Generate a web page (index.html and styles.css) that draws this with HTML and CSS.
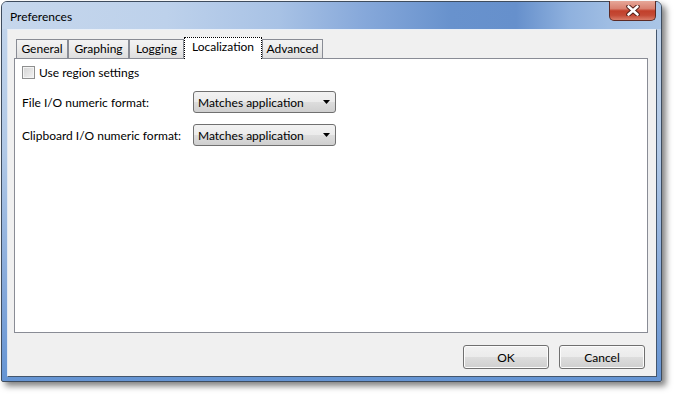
FILE: index.html
```html
<html>
	<head>
		<meta charset="utf-8">
		<link rel="stylesheet" href="styles.css">
	</head>
	<body>
		<div class="window">
			<div class="titlebar">
				<span class="title">Preferences</span>
				<div class="close">
					<svg width="14" height="11" viewBox="0 0 14 11">
						<path d="M2.5 1.5 L11.5 9.5 M11.5 1.5 L2.5 9.5" stroke="#4a1a14" stroke-width="4.4" stroke-linecap="round"/>
						<path d="M2.5 1.5 L11.5 9.5 M11.5 1.5 L2.5 9.5" stroke="#ffffff" stroke-width="2.6" stroke-linecap="round"/>
					</svg>
				</div>
			</div>

			<div class="client">
				<div class="tabs">
					<div class="tab general">General</div>
					<div class="tab graphing">Graphing</div>
					<div class="tab logging">Logging</div>
					<div class="tab localization active">Localization</div>
					<div class="tab advanced">Advanced</div>
				</div>

				<div class="panel">
					<label class="check"><span class="box"></span>Use region settings</label>

					<div class="form">
						<span class="label">File I/O numeric format:</span>
						<div class="combo">
							<span>Matches application</span>
							<svg class="arrow" width="7" height="4" viewBox="0 0 7 4"><path d="M0 0 H7 L3.5 4 Z" fill="#000"/></svg>
						</div>

						<span class="label">Clipboard I/O numeric format:</span>
						<div class="combo">
							<span>Matches application</span>
							<svg class="arrow" width="7" height="4" viewBox="0 0 7 4"><path d="M0 0 H7 L3.5 4 Z" fill="#000"/></svg>
						</div>
					</div>
				</div>

				<div class="footer">
					<button class="btn">OK</button>
					<button class="btn">Cancel</button>
				</div>
			</div>
		</div>
	</body>
</html>
```

FILE: styles.css
```css
body {
	margin: 0;
	padding: 0;
	background: #ffffff;
	font-family: "Lato", "Liberation Sans", sans-serif;
	font-size: 12px;
	color: #000;
}

.window {
	box-sizing: border-box;
	width: 661px;
	height: 381px;
	margin: 1px 0 0 1px;
	border: 1px solid #3e4c5e;
	border-radius: 6px 6px 2px 2px;
	background: linear-gradient(to bottom, #c4d6ec 0%, #b0c8e6 40%, #86a9da 75%, #6594d3 100%);
	box-shadow: 4px 4px 6px rgba(0, 0, 0, 0.5);
	display: flex;
	flex-direction: column;
}

.titlebar {
	height: 27px;
	display: flex;
	align-items: center;
	justify-content: space-between;
	padding-left: 8px;
	border-radius: 5px 5px 0 0;
	background: linear-gradient(to right, #c6d7ec 0%, #bdd1eb 25%, #a8c2e5 42%, #86a8da 55%, #6892cd 68%, #6690cc 78%, #8fb1de 86%, #9fbde3 92%, #aac5e6 100%);
}

.title {
	color: #000;
	padding-top: 1px;
}

.close {
	align-self: flex-start;
	box-sizing: border-box;
	width: 47px;
	height: 20px;
	margin-top: -1px;
	margin-right: 5px;
	border: 1px solid #5c2a24;
	border-top: none;
	border-radius: 0 0 5px 5px;
	background: linear-gradient(to bottom, #e6a798 0%, #d98170 40%, #c2402b 52%, #c44a36 75%, #d97c68 100%);
	display: flex;
	align-items: center;
	justify-content: center;
}

.client {
	flex: 1;
	display: flex;
	flex-direction: column;
	margin: 0 4px 4px 5px;
	padding: 7px 8px 7px 6px;
	background: #f0f0f0;
	border: 1px solid #44566d;
	border-top-color: #e9eff7;
	border-left-color: #dfe7f2;
}

.tabs {
	display: flex;
	align-items: flex-end;
	height: 21px;
	padding-left: 2px;
	position: relative;
	z-index: 1;
}

.tab {
	box-sizing: border-box;
	height: 19px;
	text-align: center;
	line-height: 18px;
	border: 1px solid #898c95;
	border-bottom: none;
	background: linear-gradient(to bottom, #f3f3f3 0%, #ebebeb 50%, #dedede 100%);
}

.tab.general { width: 52px; }
.tab.graphing { width: 61px; }
.tab.logging { width: 55px; }
.tab.localization { width: 78px; }
.tab.advanced { width: 61px; }

.tab.active {
	height: 22px;
	margin-bottom: -1px;
	line-height: 17px;
	background: #ffffff;
	border: 1px dotted #000;
	border-bottom: none;
}

.panel {
	flex: 1;
	background: #ffffff;
	border: 1px solid #898c95;
	padding: 6px 8px 0 7px;
}

.check {
	display: flex;
	align-items: center;
	height: 15px;
	gap: 4px;
}

.box {
	box-sizing: border-box;
	width: 13px;
	height: 13px;
	border: 1px solid #8e8f8f;
	background: linear-gradient(135deg, #d4d4d4 0%, #e6e6e6 60%, #f4f4f4 100%);
	box-shadow: inset 0 0 0 1px #f4f4f4;
}

.form {
	display: grid;
	grid-template-columns: 171px 143px;
	grid-auto-rows: 22px;
	row-gap: 11px;
	margin-top: 11px;
	align-items: center;
}

.combo {
	box-sizing: border-box;
	height: 22px;
	display: flex;
	align-items: center;
	justify-content: space-between;
	padding: 0 5px 0 4px;
	border: 1px solid #707070;
	border-radius: 3px;
	background: linear-gradient(to bottom, #f2f2f2 0%, #ebebeb 49%, #dddddd 51%, #cfcfcf 100%);
}

.footer {
	display: flex;
	justify-content: flex-end;
	gap: 10px;
	margin-top: 12px;
	padding-right: 3px;
}

.btn {
	box-sizing: border-box;
	width: 86px;
	height: 24px;
	font-family: inherit;
	font-size: 12px;
	color: #000;
	border: 1px solid #707070;
	border-radius: 3px;
	background: linear-gradient(to bottom, #f2f2f2 0%, #ebebeb 49%, #dddddd 51%, #cfcfcf 100%);
	box-shadow: inset 0 0 0 1px #fcfcfc;
}
```
